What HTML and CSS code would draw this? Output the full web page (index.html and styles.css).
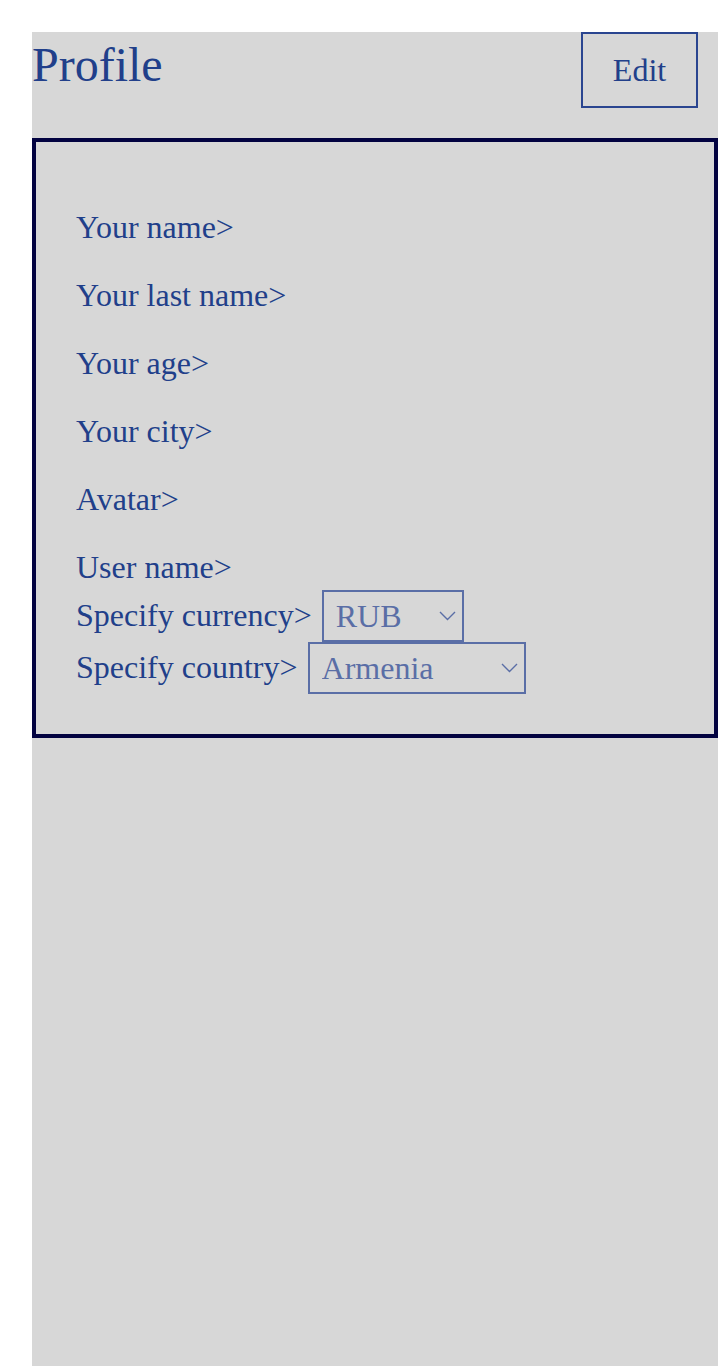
FILE: index.html
```html
<!DOCTYPE html>
<html lang="en">
<head>
<meta charset="utf-8">
<title>Profile</title>
<link rel="stylesheet" href="styles.css">
</head>
<body>
<div class="page">
  <header class="header">
    <h1 class="title">Profile</h1>
    <button class="edit-btn" type="button">Edit</button>
  </header>
  <section class="card">
    <ul class="fields">
      <li class="field">Your name&gt;</li>
      <li class="field">Your last name&gt;</li>
      <li class="field">Your age&gt;</li>
      <li class="field">Your city&gt;</li>
      <li class="field">Avatar&gt;</li>
      <li class="field">User name&gt;</li>
    </ul>
    <div class="select-rows">
      <div class="select-row select-row-currency">
        <span class="select-label">Specify currency&gt;</span>
        <span class="select-wrap">
          <select class="select select-currency">
            <option>RUB</option>
            <option>USD</option>
            <option>EUR</option>
          </select>
          <svg class="chevron" width="17" height="10" viewBox="0 0 17 10"><polyline points="1,1 8.5,8.5 16,1" fill="none" stroke="currentColor" stroke-width="1.4"/></svg>
        </span>
      </div>
      <div class="select-row select-row-country">
        <span class="select-label">Specify country&gt;</span>
        <span class="select-wrap">
          <select class="select select-country">
            <option>Armenia</option>
            <option>Russia</option>
            <option>Georgia</option>
          </select>
          <svg class="chevron" width="17" height="10" viewBox="0 0 17 10"><polyline points="1,1 8.5,8.5 16,1" fill="none" stroke="currentColor" stroke-width="1.4"/></svg>
        </span>
      </div>
    </div>
  </section>
</div>
</body>
</html>
```

FILE: styles.css
```css
html, body {
  margin: 0;
  padding: 0;
  background: #ffffff;
}

body {
  font-family: "Liberation Serif", "Times New Roman", serif;
  color: #213f8a;
  overflow-x: hidden;
}

.page {
  margin: 32px 0 0 32px;
  background: #d7d7d7;
  min-height: 1334px;
}

.header {
  display: flex;
  justify-content: space-between;
  align-items: flex-start;
  padding-right: 20px;
}

.title {
  margin: 0;
  padding-top: 5px;
  font-size: 48px;
  font-weight: normal;
  line-height: 1.15;
  color: #213f8a;
}

.edit-btn {
  box-sizing: border-box;
  width: 117px;
  height: 76px;
  margin: 0;
  padding: 0;
  border: 2px solid #2a4590;
  background: transparent;
  font-family: "Liberation Serif", "Times New Roman", serif;
  font-size: 32px;
  color: #213f8a;
  line-height: 36px;
}

.card {
  box-sizing: border-box;
  margin-top: 30px;
  border: 4px solid #020240;
  padding: 67px 0 40px 40px;
  font-size: 32px;
  line-height: 36px;
}

.fields {
  list-style: none;
  margin: 0;
  padding: 0;
  display: flex;
  flex-direction: column;
  gap: 32px;
}

.field {
  height: 36px;
}

.select-rows {
  display: flex;
  flex-direction: column;
  margin-top: 5px;
}

.select-row {
  display: flex;
  align-items: flex-start;
  gap: 10px;
  height: 52px;
}

.select-label {
  padding-top: 7px;
}

.select-wrap {
  position: relative;
  display: inline-block;
  color: #5a6ea6;
}

.select {
  box-sizing: border-box;
  appearance: none;
  -webkit-appearance: none;
  height: 52px;
  margin: 0;
  padding: 0 0 0 12px;
  border: 2px solid #5a6ea6;
  border-radius: 0;
  background: transparent;
  color: #5a6ea6;
  font-family: "Liberation Serif", "Times New Roman", serif;
  font-size: 32px;
  line-height: 36px;
  display: block;
}

.select-currency {
  width: 142px;
}

.select-country {
  width: 218px;
}

.chevron {
  position: absolute;
  right: 8px;
  top: 21px;
  pointer-events: none;
}
```
